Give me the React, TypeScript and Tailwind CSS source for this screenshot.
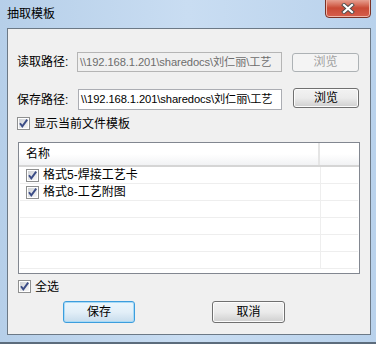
import React from "react";

const font = { fontFamily: '"Liberation Sans", "Noto Sans CJK SC", sans-serif' };

const Check = ({ checked = true }: { checked?: boolean }) => (
  <svg width="13" height="13" viewBox="0 0 13 13" className="shrink-0">
    <defs>
      <linearGradient id="cbg" x1="0" y1="0" x2="1" y2="1">
        <stop offset="0" stopColor="#cfd2d6" />
        <stop offset="1" stopColor="#f7f7f7" />
      </linearGradient>
    </defs>
    <rect x="0.5" y="0.5" width="12" height="12" fill="#fff" stroke="#8e8f8f" />
    <rect x="2" y="2" width="9" height="9" fill="url(#cbg)" />
    {checked && (
      <path d="M3 6.2 L5.3 9.3 L10.2 2.6" fill="none" stroke="#3b4c86" strokeWidth="1.9" />
    )}
  </svg>
);

const Btn = ({ children, disabled, focus, className = "" }: { children: React.ReactNode; disabled?: boolean; focus?: boolean; className?: string }) => (
  <div
    className={`flex items-center justify-center rounded-[3px] border text-[12px] ${
      disabled
        ? "border-[#adb2b5] bg-[#f4f4f4] text-[#a0a0a0]"
        : focus
        ? "border-[#3c9ddd] bg-gradient-to-b from-[#eaf6fd] via-[#e3eff8] to-[#c7dcec] text-black shadow-[inset_0_0_0_1px_#a8daf6]"
        : "border-[#707070] bg-gradient-to-b from-[#f2f2f2] via-[#ebebeb] to-[#cfcfcf] text-black shadow-[inset_0_0_0_1px_#fcfcfc]"
    } ${className}`}
  >
    {children}
  </div>
);

const path = "\\\\192.168.1.201\\sharedocs\\刘仁丽\\工艺";

export default function App() {
  const rows = ["格式5-焊接工艺卡", "格式8-工艺附图", "", "", "", ""];
  return (
    <div
      style={font}
      className="relative w-[376px] h-[344px] overflow-hidden bg-gradient-to-r from-[#b6cfe9] via-[#c9ddf2] to-[#b9d2ec] border-b-2 border-[#5c6c7c]"
    >
      {/* title bar */}
      <div className="h-[28px] flex items-center pl-[7px] text-[12px] text-black">抽取模板</div>

      {/* close button */}
      <div className="absolute left-[325px] top-[-2px] w-[46px] h-[20px] rounded-b-[4px] border border-[#7a3226] bg-gradient-to-b from-[#e9a99b] via-[#c94a35] to-[#d65e4c] flex items-center justify-center shadow-[inset_0_0_0_1px_#f0b6a8]">
        <svg width="14" height="11" viewBox="0 0 14 11">
          <path d="M3 2 L11 9 M11 2 L3 9" stroke="#4d4d4d" strokeWidth="4" strokeLinecap="square" />
          <path d="M3 2 L11 9 M11 2 L3 9" stroke="#fff" strokeWidth="2.2" strokeLinecap="square" />
        </svg>
      </div>

      {/* client area */}
      <div className="ml-[7px] mr-[5px] h-[307px] border border-[#6c7986] bg-[#f0f0f0] text-[12px] text-black">
        <div className="pl-[9px] pt-[23px]">
          <div className="flex items-center h-[20px]">
            <div className="w-[60px]">读取路径:</div>
            <div className="w-[205px] h-[20px] border border-[#b5b5b5] bg-[#f0f0f0] text-[#6d6d6d] text-[11.2px] tracking-[-0.1px] flex items-center pl-[2px] whitespace-nowrap">
              {path}
            </div>
            <Btn disabled className="ml-[10px] w-[67px] h-[19px]">浏览</Btn>
          </div>
          <div className="flex items-center h-[21px] mt-[17px]">
            <div className="w-[61px]">保存路径:</div>
            <div className="w-[204px] h-[21px] border border-[#abadb3] bg-white text-[11.2px] tracking-[-0.1px] flex items-center pl-[2px] whitespace-nowrap">
              {path}
            </div>
            <Btn className="ml-[11px] w-[66px] h-[20px] self-start -mt-[1px]">浏览</Btn>
          </div>
          <div className="flex items-center gap-[4px] mt-[7px] h-[13px]">
            <Check />
            <span>显示当前文件模板</span>
          </div>
        </div>

        {/* list */}
        <div className="ml-[10px] mt-[12px] w-[342px] h-[132px] border border-[#828790] bg-white overflow-hidden">
          <div className="flex h-[24px] bg-gradient-to-b from-white via-white to-[#f1f2f4] border-b-2 border-[#d5d5d5]">
            <div className="w-[301px] flex items-center pl-[7px] border-r-2 border-[#e5e5e5]">名称</div>
            <div className="flex-1" />
          </div>
          {rows.map((r, i) => (
            <div key={i} className="flex h-[17px] border-b border-[#eeeeee] mx-[1px]">
              <div className="w-[301px] flex items-center gap-[4px] pl-[6px] border-r border-[#eeeeee]">
                {r && (
                  <>
                    <Check />
                    <span>{r}</span>
                  </>
                )}
              </div>
              <div className="flex-1" />
            </div>
          ))}
        </div>

        <div className="flex items-center gap-[4px] ml-[10px] mt-[6px] h-[13px]">
          <Check />
          <span>全选</span>
        </div>

        <div className="flex mt-[8px] ml-[55px] gap-[77px]">
          <Btn focus className="w-[72px] h-[22px]">保存</Btn>
          <Btn className="w-[73px] h-[22px]">取消</Btn>
        </div>
      </div>
    </div>
  );
}
